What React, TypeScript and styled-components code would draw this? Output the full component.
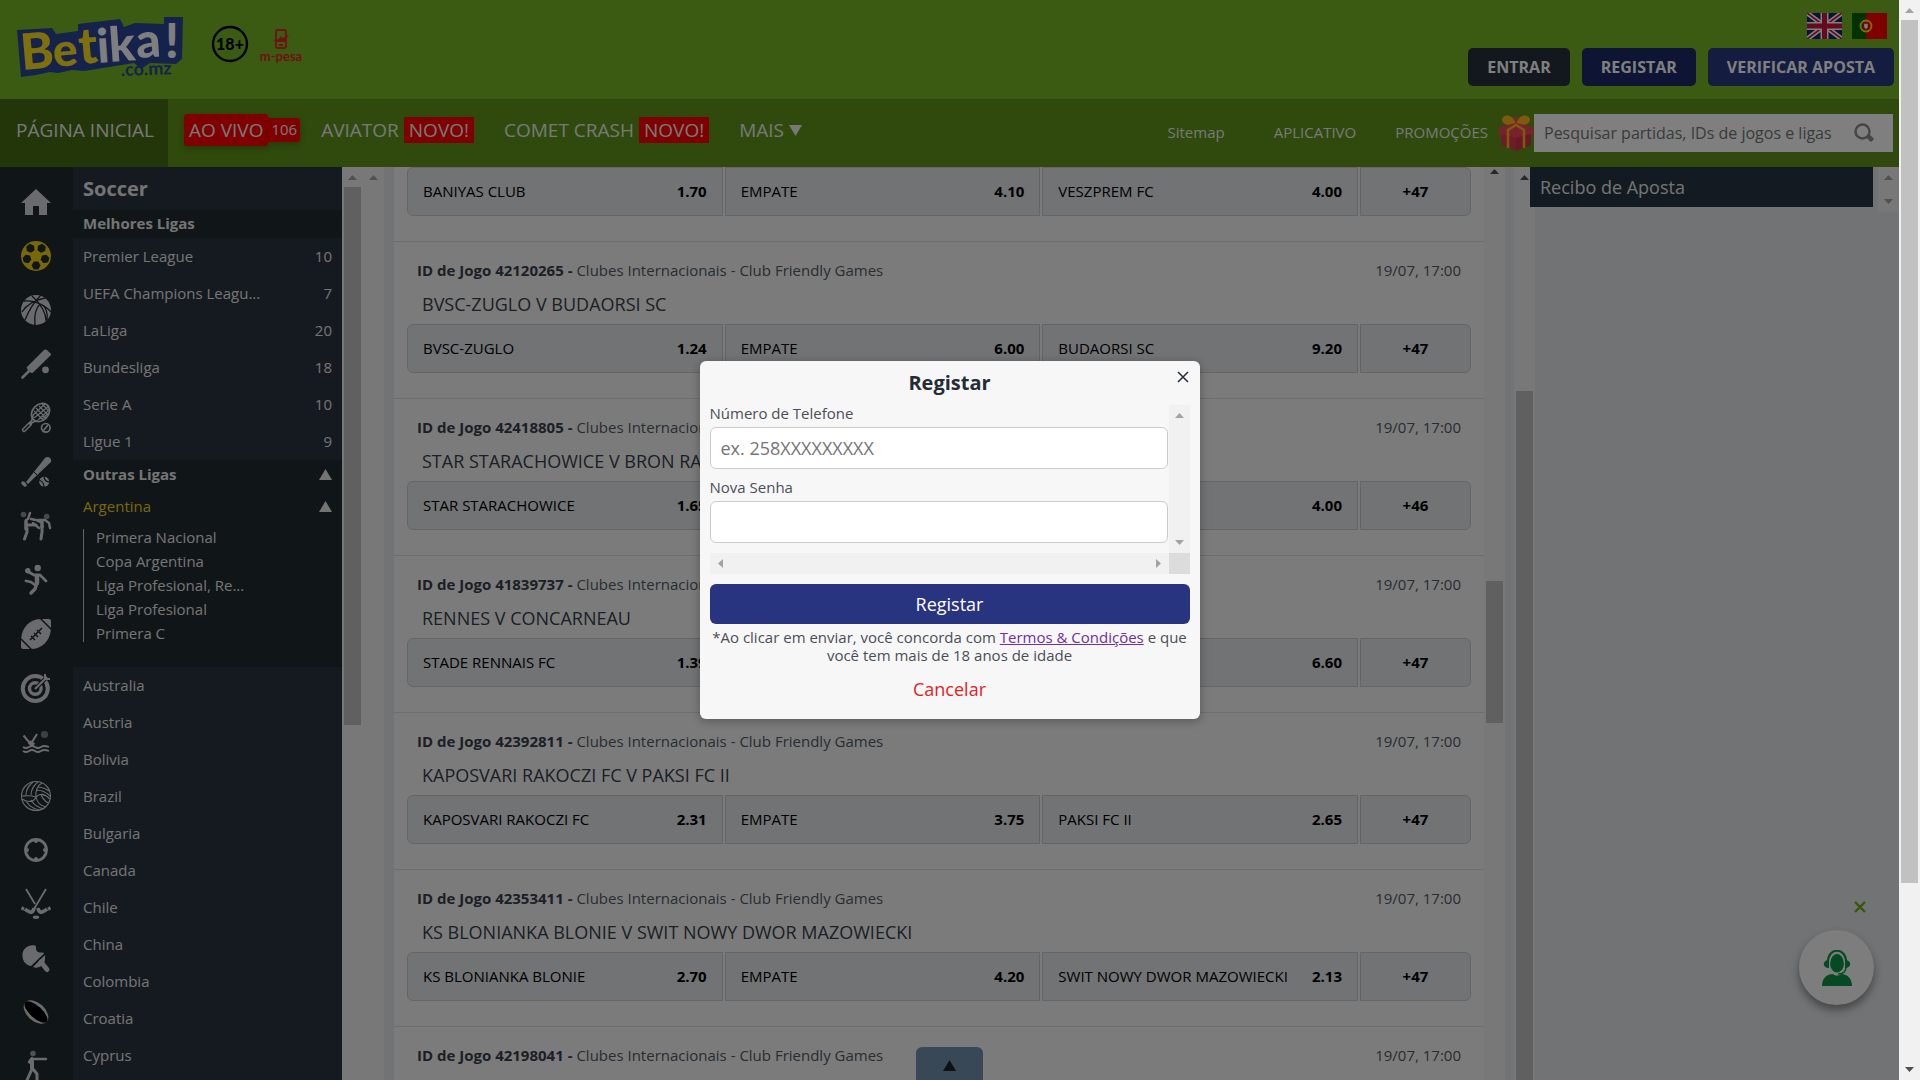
import React from "react";
import styled, { createGlobalStyle, css } from "styled-components";

const GlobalStyle = createGlobalStyle`
  *, *::before, *::after { box-sizing: border-box; }
  body { margin: 0; font-family: "Open Sans", "Noto Sans", sans-serif; font-size: 15px; line-height: 20px; color: #36404c; }
  button, input { font: inherit; }
  button { border: 0; padding: 0; background: none; color: inherit; cursor: pointer; }
  a { color: inherit; text-decoration: none; }
  ul { list-style: none; margin: 0; padding: 0; }
  h1, h2, h3, p { margin: 0; }
`;

const rail = "#202a2e";
const panel = "#28343f";

/* ---------- shell ---------- */
const Shell = styled.div`display: flex; height: 100vh; overflow: hidden;`;
const Page = styled.div`position: relative; flex: 1; min-width: 0; display: flex; flex-direction: column; overflow: hidden; background: #e2e6e9;`;
const Body = styled.div`flex: 1; min-height: 0; display: flex;`;

/* ---------- scrollbars ---------- */
const Track = styled.div<{ $horizontal?: boolean; $clip?: boolean; $open?: boolean }>`
  flex: none;
  display: flex;
  flex-direction: ${(p) => (p.$horizontal ? "row" : "column")};
  align-items: center;
  justify-content: space-between;
  width: ${(p) => (p.$horizontal ? "auto" : "21px")};
  height: ${(p) => (p.$horizontal ? "21px" : "auto")};
  padding: ${(p) => (p.$horizontal ? "0 6px" : "8px 0")};
  ${(p) => p.$clip && css`padding-top: 2px;`}
  ${(p) => p.$open && css`padding-bottom: 0;`}
  background: #f1f1f1;
`;
const rotation = { up: 0, right: 90, down: 180, left: 270 };
const ArrowSvg = styled.svg<{ $dir: keyof typeof rotation; $active?: boolean }>`
  display: block;
  flex: none;
  width: 9px;
  height: 5px;
  fill: ${(p) => (p.$active ? "#505050" : "#a3a3a3")};
  transform: rotate(${(p) => rotation[p.$dir]}deg);
`;
const Arrow = ({ dir, active }: { dir: keyof typeof rotation; active?: boolean }) => (
  <ArrowSvg $dir={dir} $active={active} viewBox="0 0 9 5" aria-hidden="true"><path d="M4.5 0 9 5H0z" /></ArrowSvg>
);
const ThumbLane = styled.div<{ $open?: boolean }>`
  flex: 1; align-self: stretch; min-height: 0; display: flex; flex-direction: column; padding: 7px 2px ${(p) => (p.$open ? 0 : 8)}px;
`;
const ThumbSpace = styled.div<{ $grow: number }>`flex: ${(p) => p.$grow} 0 0;`;
const ThumbFill = styled.div<{ $grow: number }>`flex: ${(p) => p.$grow} 0 0; background: #c1c1c1;`;

type BarProps = { thumb?: [number, number, number]; active?: boolean; clip?: boolean; bottom?: boolean };
const ScrollBar = ({ thumb, active, clip, bottom }: BarProps) => (
  <Track $clip={clip} $open={!bottom} aria-hidden="true">
    <Arrow dir="up" active={active} />
    {thumb && (
      <ThumbLane $open={!bottom}>
        <ThumbSpace $grow={thumb[0]} />
        <ThumbFill $grow={thumb[1]} />
        <ThumbSpace $grow={thumb[2]} />
      </ThumbLane>
    )}
    {bottom && <Arrow dir="down" active={!!thumb} />}
  </Track>
);

/* ---------- header ---------- */
const Header = styled.header`
  flex: none; height: 99px; display: flex; justify-content: space-between; background: #76b624; padding: 13px 5px 13px 16px;
`;
const Brand = styled.div`display: flex; align-items: flex-start; svg { display: block; overflow: visible; }`;
const HeaderSide = styled.div`display: flex; flex-direction: column; align-items: flex-end; justify-content: space-between;`;
const Flags = styled.div`display: flex; gap: 10px; padding-right: 7px;`;
const FlagButton = styled.button`display: block; width: 35px; height: 26px; svg { display: block; width: 35px; height: 26px; }`;
const Actions = styled.div`display: flex; gap: 12px;`;
const HeaderButton = styled.button<{ $bg: string }>`
  height: 38px; padding: 0 19px; border-radius: 5px; background: ${(p) => p.$bg}; color: #fff; font-size: 16px; font-weight: 700; text-transform: uppercase;
`;

const Logo = () => (
  <svg width="168" height="66" viewBox="16 13 168 66" role="img" aria-label="Betika">
    <path fill="#2a4496" d="M17 30 52 28 56 34 78 31 78 24 120 19 124 27 135 23 164 24 164 17 183 17 182 59 176 64 150 63 141 69 134 63 84 71 72 70 58 73 50 72 36 75 21 77z" />
    <g fontFamily="Lato, sans-serif" fontWeight="900" fontSize="48">
      <g fill="#ffe01e">
        <text x="22" y="70" fontSize="50" transform="rotate(-5 22 70)">B</text>
        <text x="54" y="67" fontSize="46" transform="rotate(-5 54 67)">e</text>
        <text x="80" y="64" fontSize="50" transform="rotate(-5 80 64)">t</text>
      </g>
      <g fill="#fff">
        <text x="98" y="63" fontSize="47" transform="rotate(-4 98 63)">i</text>
        <text x="110" y="62" fontSize="48" transform="rotate(-4 110 62)">k</text>
        <text x="137" y="58" fontSize="48" transform="rotate(-4 137 58)">a</text>
        <text x="165" y="58" fontSize="48">!</text>
      </g>
    </g>
    <text x="121" y="76" fill="#2a4496" fontFamily="Lato, sans-serif" fontWeight="700" fontSize="18" transform="rotate(-2 121 76)">.co.mz</text>
  </svg>
);
const AgeMark = () => (
  <svg width="38" height="66" viewBox="211 13 38 66" role="img" aria-label="18+">
    <circle cx="230" cy="44" r="17" fill="none" stroke="#000" strokeWidth="2.4" />
    <text x="230" y="50" textAnchor="middle" fontFamily="Lato, sans-serif" fontWeight="900" fontSize="16">18+</text>
  </svg>
);
const MPesa = () => (
  <svg width="46" height="66" viewBox="258 13 46 66" role="img" aria-label="m-pesa">
    <g fill="none" stroke="#dc2626" strokeWidth="1.8">
      <rect x="276" y="30" width="10" height="18" rx="1.5" />
      <path d="M276 41h10M279 45h4" />
    </g>
    <path fill="#dc2626" d="M273 41c4-1 6-2 8-5l1 2 7-3-4 5-5 2z" />
    <text x="281" y="61" textAnchor="middle" fill="#dc2626" fontFamily="Lato, sans-serif" fontWeight="700" fontSize="13">m-pesa</text>
  </svg>
);
const MarkRow = styled.div`display: flex; margin-left: 27px; gap: 9px;`;
const UkFlag = () => (
  <svg viewBox="0 0 35 26" preserveAspectRatio="none" aria-hidden="true">
    <path fill="#10296b" d="M0 0h35v26H0z" />
    <path stroke="#fff" strokeWidth="5" d="m0 0 35 26M35 0 0 26" />
    <path stroke="#d0143c" strokeWidth="1.8" d="m0 0 35 26M35 0 0 26" />
    <path stroke="#fff" strokeWidth="8" d="M17.5 0v26M0 13h35" />
    <path stroke="#d0143c" strokeWidth="5" d="M17.5 0v26M0 13h35" />
  </svg>
);
const PtFlag = () => (
  <svg viewBox="0 0 35 26" preserveAspectRatio="none" aria-hidden="true">
    <path fill="#006600" d="M0 0h14v26H0z" />
    <path fill="#ff0000" d="M14 0h21v26H14z" />
    <circle cx="14" cy="13" r="5.5" fill="none" stroke="#ffe000" strokeWidth="1.8" />
    <path fill="#fff" stroke="#e00" strokeWidth="1.5" d="M11.5 10h5v4a2.5 2.5 0 0 1-5 0z" />
  </svg>
);

/* ---------- navigation ---------- */
const Nav = styled.nav`flex: none; height: 68px; display: flex; background: #5e9418; color: #f0f0f0; padding-right: 6px;`;
const NavMain = styled.div`display: flex; font-size: 19px;`;
const NavItem = styled.a<{ $active?: boolean }>`
  display: flex; align-items: center; gap: 5px; padding: 0 14px 6px 16px; white-space: nowrap; text-transform: uppercase;
  ${(p) => p.$active && css`background: #446c12;`}
`;
const LiveItem = styled(NavItem)`gap: 0; padding-right: 5px;`;
const LiveTag = styled.span`height: 32px; line-height: 32px; padding: 0 5px; border-radius: 3px; background: #f00; box-shadow: 0 3px 6px rgba(0, 0, 0, 0.2);`;
const LiveCount = styled.span`height: 24px; line-height: 22px; padding: 0 3px; border-radius: 0 3px 3px 0; background: #f00; font-size: 15px; box-shadow: 0 3px 6px rgba(0, 0, 0, 0.2);`;
const NewTag = styled.span`height: 26px; line-height: 26px; padding: 0 5px; background: #f00;`;
const Caret = styled.svg<{ $down?: boolean }>`
  display: block; flex: none; width: 13px; height: 11px; fill: currentColor; ${(p) => p.$down && css`transform: rotate(180deg);`}
`;
const Triangle = ({ down }: { down?: boolean }) => (
  <Caret $down={down} viewBox="0 0 13 11" aria-hidden="true"><path d="M6.5 0 13 11H0z" /></Caret>
);
const NavSide = styled.div`display: flex; align-items: center; margin-left: auto; gap: 39px; padding: 0 10px 2px 0;`;
const SideLink = styled.a<{ $wide?: boolean }>`white-space: nowrap; ${(p) => p.$wide && css`margin-right: 10px;`}`;
const NavEnd = styled.div`display: flex; align-items: center; color: #f0f0f0;`;
const SearchForm = styled.form`display: flex; align-items: center; width: 359px; height: 38px; padding: 0 19px 0 10px; background: #fff;`;
const SearchInput = styled.input`
  flex: 1; min-width: 0; border: 0; outline: 0; padding: 0; background: transparent; font-size: 16px; color: #333;
  &::placeholder { color: #757575; opacity: 1; }
`;
const SearchButton = styled.button`display: flex; svg { display: block; }`;
const Gift = () => (
  <svg width="36" height="36" viewBox="0 0 36 36" aria-hidden="true">
    <path fill="#ffb31a" d="M18 9C14-3 4 0 4 5c0 4 7 6 14 6zM18 9c4-12 14-9 14-4 0 4-7 6-14 6z" />
    <path fill="#e8505b" d="M15 3q3-3 6 0l-3 5z" />
    <path fill="#f0445a" d="M1 12 18 8l17 4v8l-17 4-17-4z" />
    <path fill="#d83a50" d="M3 19l15 4 15-4v11l-15 6-15-6z" />
    <path fill="#b82c44" d="M18 23l15-4v11l-15 6z" opacity=".5" />
    <path fill="none" stroke="#ffb31a" strokeWidth="2.5" d="M10 33V15l8-5 8 5v18" />
  </svg>
);

/* ---------- sports rail ---------- */
const SportRail = styled.nav`flex: none; width: 73px; padding-top: 8px; overflow: hidden; background: ${rail};`;
const SportLink = styled.a<{ $active?: boolean }>`
  display: flex; align-items: center; justify-content: center; height: 54px; padding-right: 1px; color: ${(p) => (p.$active ? "#f0d014" : "#d4d6d8")};
  svg { display: block; width: 30px; height: 30px; overflow: visible; }
`;
const patches = [-126, -54, 18, 90, 162];
const hexagon = (cx: number, cy: number, r: number, turn: number) =>
  [0, 60, 120, 180, 240, 300].map((a) => {
    const t = ((a + turn) * Math.PI) / 180;
    return `${cx + r * Math.cos(t)},${cy + r * Math.sin(t)}`;
  }).join(" ");

const sports: { name: string; active?: boolean; art: React.ReactNode }[] = [
  { name: "Home", art: <path d="M15 2 30 16H26V28H18V19H12V28H4V16H0z" /> },
  {
    name: "Soccer", active: true, art: (
      <>
        <circle cx="15" cy="15" r="15" />
        <g fill={rail}>
          {patches.map((a) => {
            const t = (a * Math.PI) / 180;
            return <polygon key={a} points={hexagon(15 + 9.5 * Math.cos(t), 15 + 9.5 * Math.sin(t), 4.5, a + 30)} />;
          })}
        </g>
      </>
    ),
  },
  {
    name: "Basketball", art: (
      <>
        <circle cx="15" cy="15" r="15" />
        <g fill="none" stroke={rail} strokeWidth="1.3">
          <path d="M3 6c9-1 20 3 27 11M1 17C6 9 14 5 24 3M4 25C8 15 13 7 20 0M14 30c-1-9 1-17 5-21M25 26c0-8-4-16-14-25M19 9c6 2 8 9 7 16" />
        </g>
      </>
    ),
  },
  {
    name: "Cricket", art: (
      <>
        <path d="M23 1q1.5-1 3 0l3.5 3.5q1 1 0 2L11.5 24Q8 24 5.5 18.5z" />
        <path stroke="currentColor" strokeWidth="2.6" strokeLinecap="round" d="m9 21-7.5 7.5" />
        <circle cx="24.5" cy="20.8" r="3.4" />
      </>
    ),
  },
  {
    name: "Tennis", art: (
      <g fill="none" stroke="currentColor" strokeWidth="1.7">
        <ellipse cx="19.5" cy="9.5" rx="10" ry="8" transform="rotate(-45 19.5 9.5)" />
        <path strokeWidth="1.2" d="m13 8 9 9M15 5l10 10M18 3l9 9M21 1l7 7M12 12 24 1M13 15 28 3M17 17 29 6M21 16l7-6" />
        <path d="M12 12c0 5-2 7-4 9m9-3c-4 0-6 1-8 4" />
        <path strokeWidth="4.5" strokeLinecap="round" d="m9 21-6 6" />
        <path stroke={rail} strokeWidth="1.5" strokeLinecap="round" d="m8 22-5 5" />
        <circle cx="24.8" cy="24.8" r="4.3" />
        <path d="m22.5 27.5 4.5-5.5" />
      </g>
    ),
  },
  {
    name: "Baseball", art: (
      <>
        <path d="M24 1q3-2 5 0t1 4L12 22l-5 5-2-2 4-5z" />
        <path stroke={rail} d="m12 14 5 5" />
        <path stroke="currentColor" strokeWidth="3.5" strokeLinecap="round" d="m2 26 2 2" />
        <circle cx="23.2" cy="24.7" r="5" />
        <path fill="none" stroke={rail} strokeWidth="1.2" d="M18 23c3 1 5 3 5 7M23 19c0 4 2 6 6 6" />
      </>
    ),
  },
  {
    name: "MMA", art: (
      <>
        <g opacity=".6"><circle cx="2.5" cy="3.5" r="2.8" /><circle cx="25.7" cy="5.5" r="2.8" /></g>
        <g fill="none" stroke="currentColor" strokeLinejoin="round" strokeLinecap="round">
          <path strokeWidth="3.5" d="M5 10v8M21 11v5" />
          <path strokeWidth="3" d="M6 17 6 21 3.5 28M6 14 15 14M21 15v6l-1 7" />
          <path strokeWidth="2.4" d="M9 2 7 8 5 9M10 8l5 1 4 2M17 9l7 0 4 3 1 5M12 12l6 5" />
        </g>
      </>
    ),
  },
  {
    name: "Handball", art: (
      <>
        <circle cx="16.7" cy="3" r="3.2" /><circle cx="6.8" cy="5.8" r="2.7" />
        <g fill="none" stroke="currentColor" strokeLinejoin="round" strokeLinecap="round">
          <path strokeWidth="2.8" d="m6 6 7 4h6l6 6M14 20l-4-3-5-1" />
          <path strokeWidth="4.5" d="M16 11v7" />
          <path strokeWidth="3.4" d="m16 18-2 6-4 4" />
        </g>
      </>
    ),
  },
  {
    name: "Football", art: (
      <>
        <path d="M0 20C1 8 9 0 20 0h8q2 0 2 2v8C29 22 21 30 10 30H2q-2 0-2-2z" />
        <path fill="none" stroke={rail} strokeWidth="1.5" d="M19-1 31 11M-1 19 11 31M9 21 21 9M10 17l4 4M13 14l4 4M16 11l4 4" />
      </>
    ),
  },
  {
    name: "Darts", art: (
      <g fill="none" stroke="currentColor">
        <circle cx="14.3" cy="15.5" r="12.5" strokeWidth="4" />
        <circle cx="14.3" cy="15.5" r="5.8" strokeWidth="3.4" />
        <path stroke={rail} strokeWidth="4" d="m16 14 10-10" />
        <path strokeWidth="2" d="M14 16 26 4M24 6V1M24 6h5" />
      </g>
    ),
  },
  {
    name: "Water polo", art: (
      <>
        <circle cx="23.5" cy="7.5" r="3.6" opacity=".5" />
        <g fill="none" stroke="currentColor" strokeWidth="2">
          <path d="m2.5 8.5 6 7 2 3M16 7l-5 8" />
          <path strokeWidth="4" d="m8 15 5 3" />
          <path strokeWidth="1.8" d="M2 20q3 2 6 0t6 0 6 0 8 0M2 24q3 2 6 0t6 0 6 0 8 0" />
        </g>
      </>
    ),
  },
  {
    name: "Volleyball", art: (
      <g fill="none" stroke="currentColor" strokeWidth="1.1">
        <circle cx="15" cy="15" r="14.5" />
        <path d="M15 16C14 10 17 4 21 2M15 16c4-4 9-3 14 2M15 16c-2 5-8 6-14 2M15 16C8 14 5 15 1 15M5 14c0-5 2-9 7-13M10 14c0-5 2-9 7-13M15 9c5 0 10 2 14 6M17 6c5 0 8 2 11 4M15 16c1 5 5 9 10 10M10 19c3 5 8 8 13 9M5 20c3 5 8 8 13 9M20 13c1 4 4 7 7 9" />
      </g>
    ),
  },
  {
    name: "Futsal", art: (
      <>
        <circle cx="15" cy="15" r="10.5" fill="none" stroke="currentColor" strokeWidth="2.8" />
        <circle cx="15" cy="6" r="2" /><circle cx="15" cy="24" r="2" /><circle cx="6" cy="15" r="2" /><circle cx="24" cy="15" r="2" />
      </>
    ),
  },
  {
    name: "Hockey", art: (
      <>
        <g fill="none" stroke="currentColor">
          <path strokeWidth="1.8" d="m5 0 9 15M25 0 13 20" />
          <path strokeWidth="3.8" d="M13 19q-1 5-4 4t-5-3M17 19q1 5 4 4t5-3" />
          <path strokeWidth="2.8" d="m2.5 18-1.5 3M27.5 18l1.5 3" />
        </g>
        <ellipse cx="15" cy="28.3" rx="3.2" ry="1.7" />
      </>
    ),
  },
  {
    name: "Table tennis", art: (
      <>
        <path d="M10 23C4 22 1 17 1.5 11 2 5 8 1 14 2.5q1.5.5 1 2.5c0 4 3 5 6 4.5q2 0 2 1z" />
        <path d="m12 24 12-12c0 4 0 6-1 8l-3 3c-3 2-5 2-8 1z" />
        <path stroke="currentColor" strokeWidth="5" strokeLinecap="round" d="m20 19 6 7.5" />
      </>
    ),
  },
  {
    name: "Rugby", art: (
      <>
        <ellipse cx="15" cy="15" rx="14.5" ry="9" transform="rotate(42 15 15)" />
        <ellipse cx="15" cy="15" rx="14.5" ry="6" fill="#000" transform="rotate(42 15 15)" />
      </>
    ),
  },
  {
    name: "Boxing", art: (
      <>
        <circle cx="12" cy="2.5" r="2.8" opacity=".7" />
        <g fill="none" stroke="currentColor" strokeLinejoin="round" strokeLinecap="round">
          <path strokeWidth="4" d="M11 9v8" />
          <path strokeWidth="2.4" d="M10 8h15M11 7l-3 4 3 2" />
          <path strokeWidth="3" d="m11 18-5 11M12 18l4 5v7" />
        </g>
      </>
    ),
  },
];

/* ---------- leagues ---------- */
const Leagues = styled.aside`flex: none; width: 269px; overflow: hidden; background: ${panel}; color: #e8e8e8;`;
const SportTitle = styled.h2`padding: 0 10px; font-size: 20px; line-height: 43px; font-weight: 700;`;
const GroupTitle = styled.h3<{ $tall?: boolean }>`
  display: flex; align-items: center; justify-content: space-between; height: ${(p) => (p.$tall ? 30 : 28)}px;
  padding: 0 10px 2px; background: ${rail}; font-size: 15px; line-height: 20px; font-weight: 700;
`;
const LeagueLink = styled.a`display: flex; align-items: center; justify-content: space-between; height: 37px; padding: 0 10px 2px;`;
const OpenCountry = styled.div`background: ${rail}; padding-bottom: 25px;`;
const CountryToggle = styled.button`
  display: flex; align-items: center; justify-content: space-between; width: 100%; height: 34px; padding: 0 10px 2px;
  span { color: #f0d014; }
`;
const SubLeagues = styled.ul`
  display: flex; flex-direction: column; gap: 7px; margin: 5px 10px 0; padding-left: 12px; border-left: 1px solid #c8c8c8; line-height: 17px;
`;
const bestLeagues: [string, number][] = [
  ["Premier League", 10], ["UEFA Champions Leagu...", 7], ["LaLiga", 20], ["Bundesliga", 18], ["Serie A", 10], ["Ligue 1", 9],
];
const argentina = ["Primera Nacional", "Copa Argentina", "Liga Profesional, Re...", "Liga Profesional", "Primera C"];
const countries = ["Australia", "Austria", "Bolivia", "Brazil", "Bulgaria", "Canada", "Chile", "China", "Colombia", "Croatia", "Cyprus"];

/* ---------- matches ---------- */
const Center = styled.main`flex: 1; min-width: 0; display: flex; padding: 0 9px 0 10px;`;
const MatchList = styled.div`flex: 1; min-width: 0; overflow: hidden; background: #f7f7f7;`;
const MatchCard = styled.article`
  padding: 0 13px 25px;
  & + & { border-top: 1px solid #d9dcde; padding-top: 18px; }
`;
const MatchMeta = styled.div`display: flex; justify-content: space-between; padding: 0 10px 10px; color: #505a66; b { color: #36404c; }`;
const MatchTitle = styled.h3`padding: 0 15px 6px; font-size: 18px; line-height: 28px; font-weight: 400; color: #36404c;`;
const Odds = styled.div`display: grid; grid-template-columns: repeat(3, 1fr) 111px; gap: 2px;`;
const OddButton = styled.button<{ $center?: boolean }>`
  display: flex; align-items: center; justify-content: ${(p) => (p.$center ? "center" : "space-between")};
  height: 49px; padding: 0 15px 2px; border: 1px solid #c6cbce; background: #e2e6e9; color: #000; white-space: nowrap;
  &:first-child { border-radius: 6px 0 0 6px; }
  &:last-child { border-radius: 0 6px 6px 0; }
  b { font-weight: 700; }
`;
type Match = { id?: string; title?: string; odds: [string, string][]; more: string };
const matches: Match[] = [
  { odds: [["BANIYAS CLUB", "1.70"], ["EMPATE", "4.10"], ["VESZPREM FC", "4.00"]], more: "+47" },
  { id: "42120265", title: "BVSC-ZUGLO V BUDAORSI SC", odds: [["BVSC-ZUGLO", "1.24"], ["EMPATE", "6.00"], ["BUDAORSI SC", "9.20"]], more: "+47" },
  { id: "42418805", title: "STAR STARACHOWICE V BRON RADOM", odds: [["STAR STARACHOWICE", "1.65"], ["EMPATE", "4.00"], ["BRON RADOM", "4.00"]], more: "+46" },
  { id: "41839737", title: "RENNES V CONCARNEAU", odds: [["STADE RENNAIS FC", "1.39"], ["EMPATE", "4.60"], ["CONCARNEAU", "6.60"]], more: "+47" },
  { id: "42392811", title: "KAPOSVARI RAKOCZI FC V PAKSI FC II", odds: [["KAPOSVARI RAKOCZI FC", "2.31"], ["EMPATE", "3.75"], ["PAKSI FC II", "2.65"]], more: "+47" },
  { id: "42353411", title: "KS BLONIANKA BLONIE V SWIT NOWY DWOR MAZOWIECKI", odds: [["KS BLONIANKA BLONIE", "2.70"], ["EMPATE", "4.20"], ["SWIT NOWY DWOR MAZOWIECKI", "2.13"]], more: "+47" },
  { id: "42198041", odds: [], more: "" },
];

/* ---------- bet slip ---------- */
const Slip = styled.aside`flex: none; width: 364px; display: flex; align-items: flex-start;`;
const SlipTitle = styled.h2`
  position: relative; flex: 1; margin: 0 5px 0 -5px; padding: 0 10px; background: #263442; color: #e8e8e8; font-size: 18px; line-height: 40px; font-weight: 400;
`;
const SlipScroll = styled.div`display: flex; height: 45px;`;

/* ---------- floating ---------- */
const BackToTop = styled.button`
  position: absolute; left: 50%; bottom: 0; width: 67px; height: 33px; margin-left: -34px; border-radius: 6px 6px 0 0;
  display: flex; align-items: center; justify-content: center; padding-top: 4px; background: #7390ae; color: #1c2228;
`;
const Chat = styled.div`position: absolute; right: 25px; bottom: 75px; display: flex; flex-direction: column; align-items: flex-end; gap: 17px;`;
const ChatClose = styled.button`display: flex; padding-right: 8px; svg { display: block; }`;
const ChatButton = styled.button`
  display: flex; align-items: center; justify-content: center; width: 75px; height: 75px; border-radius: 50%; background: #fbfbfb; color: #0c9448;
  box-shadow: 0 5px 8px rgba(0, 0, 0, 0.4);
`;

/* ---------- dialog ---------- */
const Overlay = styled.div`position: absolute; inset: 0; display: flex; align-items: center; justify-content: center; background: rgba(0, 0, 0, 0.5);`;
const Dialog = styled.div`
  position: relative; width: 500px; padding: 10px 10px 12px; border-radius: 6px; background: #f7f7f7; color: #4a4f57; text-align: center; box-shadow: 0 2px 10px rgba(0, 0, 0, 0.3);
`;
const DialogTitle = styled.h1`font-size: 20px; line-height: 24px; font-weight: 700; color: #242c36;`;
const CloseButton = styled.button`position: absolute; top: 10px; right: 11px; display: flex; color: #242c36;`;
const FormArea = styled.div`display: grid; grid-template-columns: 1fr 21px; margin-top: 10px; text-align: left;`;
const Fields = styled.div`padding-right: 1px;`;
const Field = styled.div`padding-bottom: 10px;`;
const Label = styled.label`display: block; padding-bottom: 5px; line-height: 17px;`;
const TextInput = styled.input`
  display: block; width: 100%; height: 42px; padding: 0 10px; border: 1px solid #ccc; border-radius: 6px; background: #fff; font-size: 18px; color: #333; outline: 0;
  &::placeholder { color: #757575; opacity: 1; }
`;
const Corner = styled.div`background: #dcdcdc;`;
const SubmitButton = styled.button`
  display: block; width: 100%; height: 40px; margin-top: 10px; border-radius: 6px; background: #283480; color: #fff; font-size: 18px;
`;
const Notice = styled.p`margin-top: 4px; line-height: 18px; a { color: #7030a0; text-decoration: underline; }`;
const CancelButton = styled.button`height: 36px; margin-top: 7px; color: #e02424; font-size: 18px; line-height: 36px;`;
const Centered = styled.div`display: flex; justify-content: center;`;

export default function App() {
  return (
    <Shell>
      <GlobalStyle />
      <Page>
        <Header>
          <Brand>
            <a href="#home"><Logo /></a>
            <MarkRow><AgeMark /><MPesa /></MarkRow>
          </Brand>
          <HeaderSide>
            <Flags>
              <FlagButton type="button" aria-label="English"><UkFlag /></FlagButton>
              <FlagButton type="button" aria-label="Português"><PtFlag /></FlagButton>
            </Flags>
            <Actions>
              <HeaderButton type="button" $bg="#24303a">Entrar</HeaderButton>
              <HeaderButton type="button" $bg="#1c2868">Registar</HeaderButton>
              <HeaderButton type="button" $bg="#283880">Verificar aposta</HeaderButton>
            </Actions>
          </HeaderSide>
        </Header>

        <Nav>
          <NavMain>
            <NavItem href="#home" $active>Página inicial</NavItem>
            <LiveItem href="#live"><LiveTag>Ao vivo</LiveTag><LiveCount>106</LiveCount></LiveItem>
            <NavItem href="#aviator">Aviator <NewTag>Novo!</NewTag></NavItem>
            <NavItem href="#comet">Comet Crash <NewTag>Novo!</NewTag></NavItem>
            <NavItem href="#more">Mais <Triangle down /></NavItem>
          </NavMain>
          <NavSide>
            <SideLink href="#sitemap" $wide>Sitemap</SideLink>
            <SideLink href="#app">APLICATIVO</SideLink>
            <SideLink href="#promo">PROMOÇÕES</SideLink>
          </NavSide>
          <NavEnd>
            <Gift />
            <SearchForm role="search">
              <SearchInput type="text" aria-label="Pesquisar" placeholder="Pesquisar partidas, IDs de jogos e ligas" />
              <SearchButton type="button" aria-label="Pesquisar">
                <svg width="20" height="20" viewBox="0 0 20 20" fill="none" stroke="#8a8a8a"><circle cx="8.5" cy="8.5" r="7" strokeWidth="2.4" /><path strokeWidth="4.5" d="m14 13 4.5 4.500" /></svg>
              </SearchButton>
            </SearchForm>
          </NavEnd>
        </Nav>

        <Body>
          <SportRail aria-label="Desportos">
            {sports.map((s) => (
              <SportLink key={s.name} href="#sport" aria-label={s.name} $active={s.active}>
                <svg viewBox="0 0 30 30" fill="currentColor" aria-hidden="true">{s.art}</svg>
              </SportLink>
            ))}
          </SportRail>

          <Leagues>
            <SportTitle>Soccer</SportTitle>
            <GroupTitle>Melhores Ligas</GroupTitle>
            <ul>
              {bestLeagues.map(([name, count]) => (
                <li key={name}><LeagueLink href="#league"><span>{name}</span><span>{count}</span></LeagueLink></li>
              ))}
            </ul>
            <GroupTitle $tall>Outras Ligas <Triangle /></GroupTitle>
            <OpenCountry>
              <CountryToggle type="button" aria-expanded="true"><span>Argentina</span><Triangle /></CountryToggle>
              <SubLeagues>
                {argentina.map((name) => <li key={name}><a href="#league">{name}</a></li>)}
              </SubLeagues>
            </OpenCountry>
            <ul>
              {countries.map((name) => <li key={name}><LeagueLink href="#country">{name}</LeagueLink></li>)}
            </ul>
          </Leagues>
          <ScrollBar thumb={[0, 538, 355]} />
          <ScrollBar />

          <Center>
            <MatchList>
              {matches.map((m, i) => (
                <MatchCard key={i}>
                  {m.id && (
                    <MatchMeta>
                      <span><b>ID de Jogo {m.id} - </b>Clubes Internacionais - Club Friendly Games</span>
                      <time>19/07, 17:00</time>
                    </MatchMeta>
                  )}
                  {m.title && <MatchTitle>{m.title}</MatchTitle>}
                  {m.odds.length > 0 && (
                    <Odds>
                      {m.odds.map(([team, odd]) => (
                        <OddButton key={team} type="button"><span>{team}</span><b>{odd}</b></OddButton>
                      ))}
                      <OddButton type="button" $center><b>{m.more}</b></OddButton>
                    </Odds>
                  )}
                </MatchCard>
              ))}
            </MatchList>
            <ScrollBar active clip thumb={[400, 142, 357]} />
          </Center>
          <ScrollBar active thumb={[204, 689, 0]} />

          <Slip>
            <SlipTitle>Recibo de Aposta</SlipTitle>
            <SlipScroll><ScrollBar bottom /></SlipScroll>
          </Slip>
        </Body>

        <BackToTop type="button" aria-label="Voltar ao topo"><Triangle /></BackToTop>
        <Chat>
          <ChatClose type="button" aria-label="Fechar chat">
            <svg width="12" height="12" viewBox="0 0 12 12" stroke="#78a818" strokeWidth="2.4"><path d="m1 1 10 10M11 1 1 11" /></svg>
          </ChatClose>
          <ChatButton type="button" aria-label="Apoio ao cliente">
            <svg width="30" height="36" viewBox="0 0 30 36" fill="currentColor" aria-hidden="true">
              <path d="M0 36c0-8 5-12 11-12 2 2 6 2 8 0 6 0 11 4 11 12z" />
              <ellipse cx="15" cy="13" rx="7" ry="9.5" />
              <path fill="none" stroke="currentColor" strokeWidth="2.2" d="M6 12C6-3 24-3 24 12" />
              <path d="M7 10c-7 0-7 8 0 8zM23 10c7 0 7 8 0 8z" />
              <path fill="none" stroke="#fbfbfb" strokeWidth="1.2" d="M7.500 14C7.500 0 22.500 0 22.500 14" />
              <path fill="none" stroke="currentColor" strokeWidth="1.4" d="M24 17c0 5-3 7-8 7" />
            </svg>
          </ChatButton>
        </Chat>

        <Overlay>
          <Dialog role="dialog" aria-modal="true" aria-labelledby="register-title">
            <DialogTitle id="register-title">Registar</DialogTitle>
            <CloseButton type="button" aria-label="Fechar">
              <svg width="12" height="12" viewBox="0 0 12 12" stroke="currentColor" strokeWidth="1.5"><path d="m1 1 10 10M11 1 1 11" /></svg>
            </CloseButton>
            <FormArea>
              <Fields>
                <Field>
                  <Label htmlFor="phone">Número de Telefone</Label>
                  <TextInput id="phone" type="tel" placeholder="ex. 258XXXXXXXXX" />
                </Field>
                <Field>
                  <Label htmlFor="password">Nova Senha</Label>
                  <TextInput id="password" type="password" />
                </Field>
              </Fields>
              <ScrollBar bottom />
              <Track $horizontal aria-hidden="true"><Arrow dir="left" /><Arrow dir="right" /></Track>
              <Corner />
            </FormArea>
            <SubmitButton type="submit">Registar</SubmitButton>
            <Notice>*Ao clicar em enviar, você concorda com <a href="#terms">Termos &amp; Condições</a> e que você tem mais de 18 anos de idade</Notice>
            <Centered><CancelButton type="button">Cancelar</CancelButton></Centered>
          </Dialog>
        </Overlay>
      </Page>
      <ScrollBar thumb={[0, 863, 176]} bottom />
    </Shell>
  );
}
